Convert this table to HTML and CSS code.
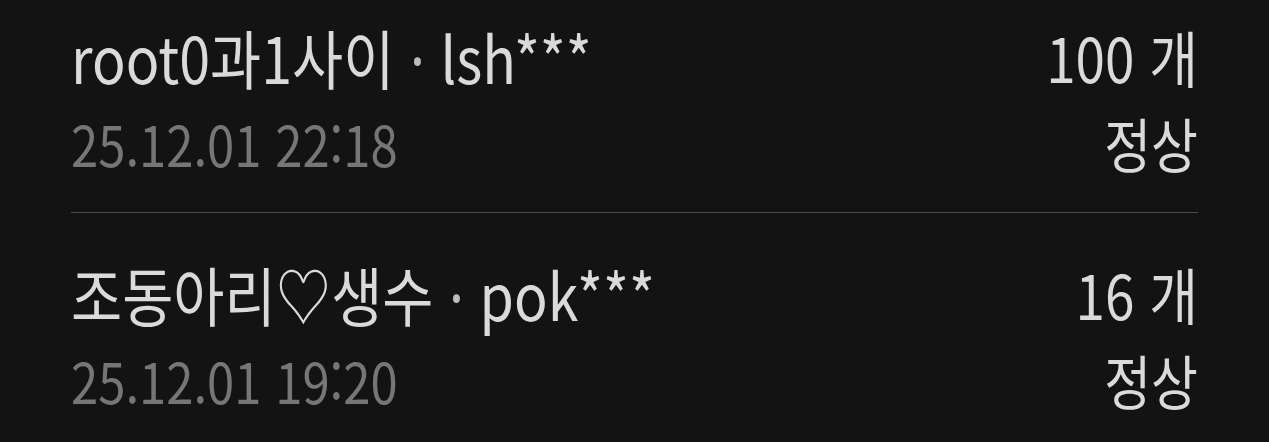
FILE: index.html
```html
<!DOCTYPE html>
<html lang="ko">
<head>
    <meta charset="UTF-8">
    <meta name="viewport" content="width=device-width, initial-scale=1.0">
    <title>선물 내역</title>
    <link rel="stylesheet" href="styles.css">
</head>
<body>
    <ul class="gift-list">
        <li class="gift-item">
            <div class="gift-info">
                <div class="gift-name">root0과1사이 <span class="sep">·</span> lsh***</div>
                <div class="gift-date">25.12.01 22:18</div>
            </div>
            <div class="gift-side">
                <div class="gift-count">100 개</div>
                <div class="gift-status">정상</div>
            </div>
        </li>
        <li class="gift-item">
            <div class="gift-info">
                <div class="gift-name">조동아리♡생수 <span class="sep">·</span> pok***</div>
                <div class="gift-date">25.12.01 19:20</div>
            </div>
            <div class="gift-side">
                <div class="gift-count">16 개</div>
                <div class="gift-status">정상</div>
            </div>
        </li>
    </ul>
</body>
</html>
```
FILE: styles.css
```css
body {
    margin: 0;
    padding: 0;
    background-color: #131313;
    font-family: "Noto Sans CJK KR", "Noto Sans", sans-serif;
    overflow: hidden;
}
/* 스크롤된 목록 - 첫 항목 위쪽이 잘려 보임 */
.gift-list {
    list-style: none;
    margin: -24px 0 0;
    padding: 0 71px;
}
.gift-item {
    display: flex;
    justify-content: space-between;
    padding: 54px 0 36px;
    border-bottom: 1px solid #4d4d4d;
}
.gift-item:last-child {
    border-bottom: none;
}
.gift-name,
.gift-date,
.gift-count,
.gift-status {
    height: 60px;
    line-height: 60px;
    white-space: nowrap;
    transform: scaleY(1.15);
}
.gift-name {
    color: #dadada;
    font-size: 55.6px;
    transform-origin: 0 54px;
}
.gift-name .sep {
    font-family: "Noto Sans", sans-serif;
    line-height: 0;
    color: #bdbdbd;
}
.gift-count {
    color: #dadada;
    font-size: 53px;
    transform-origin: 100% 53px;
}
.gift-date {
    color: #767676;
    font-size: 49px;
    margin-top: 26px;
    transform-origin: 0 51px;
}
.gift-status {
    color: #dadada;
    font-size: 51px;
    margin-top: 26px;
    transform-origin: 100% 53px;
}
.gift-side {
    text-align: right;
}
```
